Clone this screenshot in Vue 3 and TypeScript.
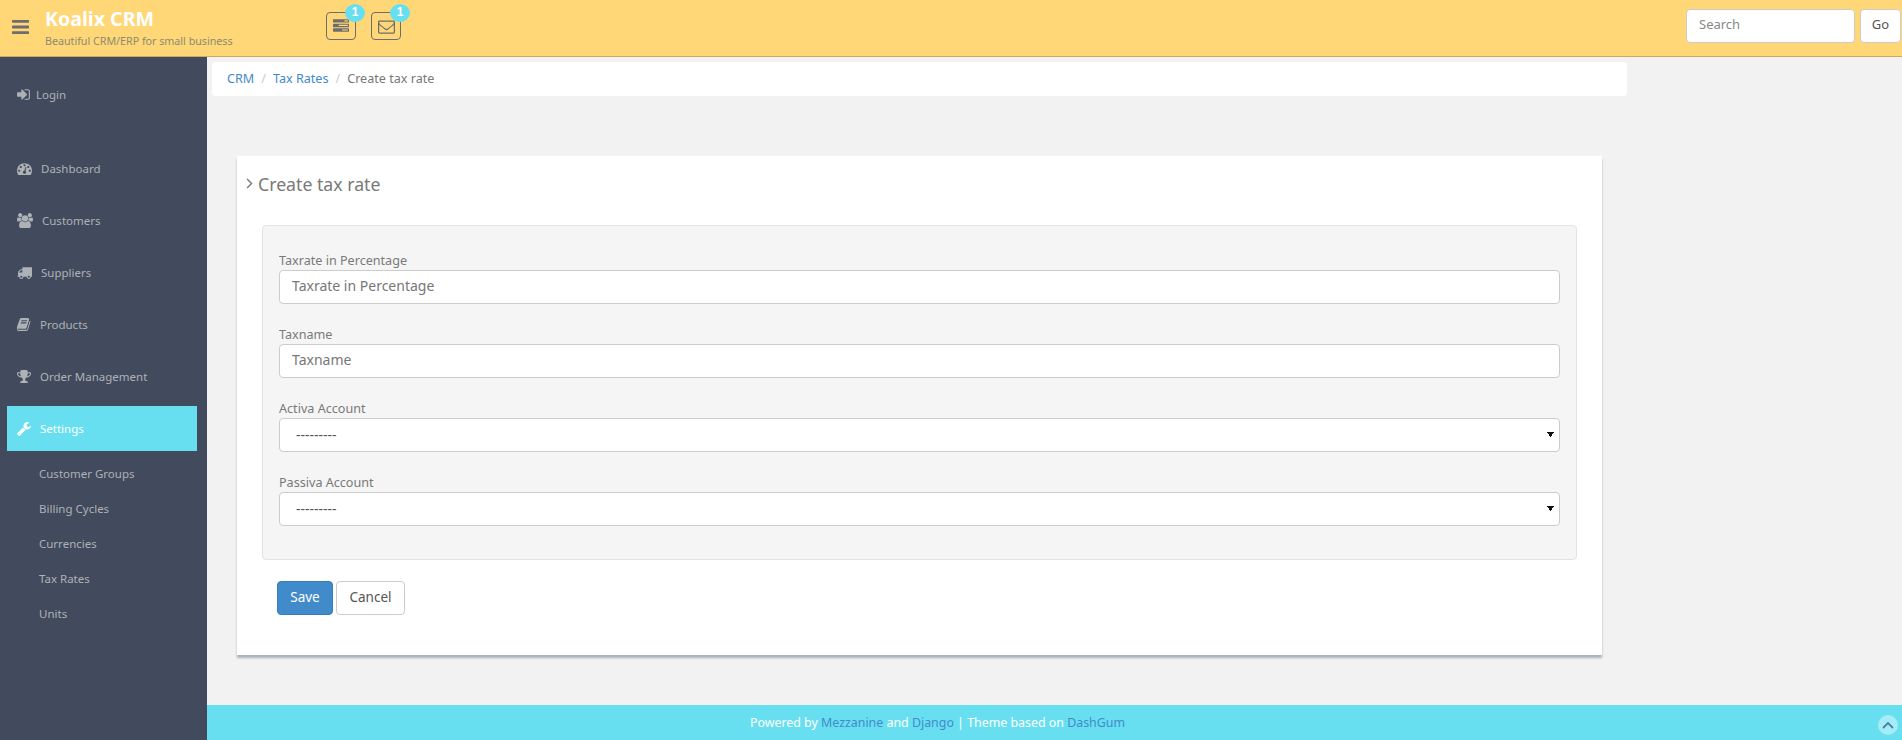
<script setup lang="ts">
interface NavItem {
  label: string;
  viewBox: string;
  width: number;
  d: string;
  active?: boolean;
}

const icons = {
  tasks: 'M1024 1408h640v-128h-640v128zm-384-512h1024v-128h-1024v128zm640-512h384v-128h-384v128zm512 832v256q0 26-19 45t-45 19h-1664q-26 0-45-19t-19-45v-256q0-26 19-45t45-19h1664q26 0 45 19t19 45zm0-512v256q0 26-19 45t-45 19h-1664q-26 0-45-19t-19-45v-256q0-26 19-45t45-19h1664q26 0 45 19t19 45zm0-512v256q0 26-19 45t-45 19h-1664q-26 0-45-19t-19-45v-256q0-26 19-45t45-19h1664q26 0 45 19t19 45z',
  envelope: 'M1664 1504v-768q-32 36-69 66-268 206-426 338-51 43-83 67t-86.500 48.500-102.500 24.500h-2q-48 0-102.500-24.500t-86.500-48.500-83-67q-158-132-426-338-37-30-69-66v768q0 13 9.500 22.500t22.500 9.500h1472q13 0 22.500-9.500t9.500-22.500zm0-1051v-24.500l-.5-13-3-12.500-5.500-9-9-7.500-14-2.500h-1472q-13 0-22.500 9.500t-9.500 22.500q0 168 147 284 193 152 401 317 6 5 35 29.500t46 37.500 44.500 31.500 50.500 27.500 43 9h2q20 0 43-9t50.500-27.500 44.500-31.500 46-37.500 35-29.500q208-165 401-317 54-43 100.500-115.500t46.500-131.500zm128-37v1088q0 66-47 113t-113 47h-1472q-66 0-113-47t-47-113v-1088q0-66 47-113t113-47h1472q66 0 113 47t47 113z',
  bars: 'M1664 1344v128q0 26-19 45t-45 19h-1408q-26 0-45-19t-19-45v-128q0-26 19-45t45-19h1408q26 0 45 19t19 45zm0-512v128q0 26-19 45t-45 19h-1408q-26 0-45-19t-19-45v-128q0-26 19-45t45-19h1408q26 0 45 19t19 45zm0-512v128q0 26-19 45t-45 19h-1408q-26 0-45-19t-19-45v-128q0-26 19-45t45-19h1408q26 0 45 19t19 45z',
  signIn: 'M1184 896q0 26-19 45l-544 544q-19 19-45 19t-45-19-19-45v-288h-448q-26 0-45-19t-19-45v-384q0-26 19-45t45-19h448v-288q0-26 19-45t45-19 45 19l544 544q19 19 19 45zm352-352v704q0 119-84.500 203.500t-203.500 84.500h-320q-13 0-22.500-9.500t-9.500-22.500q0-4-1-20t-.5-26.500 3-23.500 10-19.500 20.500-6.500h320q66 0 113-47t47-113v-704q0-66-47-113t-113-47h-312l-11.500-1-11.500-3-8-5.500-7-9-2-13.500q0-4-1-20t-.5-26.500 3-23.500 10-19.500 20.500-6.500h320q119 0 203.500 84.500t84.500 203.500z',
};

const navItems: NavItem[] = [
  {
    label: 'Dashboard',
    viewBox: '0 0 1792 1792',
    width: 15,
    d: 'M384 1152q0-53-37.500-90.500t-90.500-37.500-90.500 37.500-37.500 90.500 37.500 90.500 90.500 37.500 90.500-37.500 37.500-90.500zm192-448q0-53-37.500-90.500t-90.500-37.500-90.500 37.500-37.500 90.500 37.500 90.500 90.500 37.500 90.500-37.500 37.500-90.500zm428 481l101-382q6-26-7.500-48.500t-38.500-29.500-48 6.500-30 39.500l-101 382q-60 5-107 43.500t-63 98.500q-20 77 20 146t117 89 146-20 89-117q16-60-6-117t-72-91zm660-33q0-53-37.500-90.500t-90.500-37.500-90.500 37.500-37.500 90.500 37.500 90.500 90.500 37.500 90.500-37.500 37.500-90.500zm-640-640q0-53-37.500-90.500t-90.500-37.500-90.500 37.500-37.500 90.500 37.500 90.500 90.500 37.500 90.500-37.500 37.500-90.500zm448 192q0-53-37.500-90.500t-90.500-37.500-90.500 37.500-37.500 90.500 37.500 90.500 90.500 37.500 90.500-37.500 37.500-90.500zm320 448q0 261-141 483-19 29-54 29h-1402q-35 0-54-29-141-221-141-483 0-182 71-348t191-286 286-191 348-71 348 71 286 191 191 286 71 348z',
  },
  {
    label: 'Customers',
    viewBox: '0 0 1920 1792',
    width: 16,
    d: 'M593 896q-162 5-265 128h-134q-82 0-138-40.500t-56-118.500q0-353 124-353 6 0 43.500 21t97.500 42.500 119 21.500q67 0 133-23-5 37-5 66 0 139 81 256zm1071 637q0 120-73 189.500t-194 69.500h-874q-121 0-194-69.500t-73-189.500q0-53 3.500-103.500t14-109 26.500-108.500 43-97.500 62-81 85.500-53.500 111.500-20q10 0 43 21.500t73 48 107 48 135 21.500 135-21.500 107-48 73-48 43-21.500q61 0 111.500 20t85.500 53.500 62 81 43 97.500 26.500 108.500 14 109 3.500 103.500zm-1024-1277q0 106-75 181t-181 75-181-75-75-181 75-181 181-75 181 75 75 181zm704 384q0 159-112.500 271.500t-271.500 112.500-271.500-112.500-112.500-271.500 112.500-271.500 271.500-112.500 271.500 112.500 112.500 271.500zm576 225q0 78-56 118.500t-138 40.500h-134q-103-123-265-128 81-117 81-256 0-29-5-66 66 23 133 23 59 0 119-21.500t97.500-42.500 43.500-21q124 0 124 353zm-128-609q0 106-75 181t-181 75-181-75-75-181 75-181 181-75 181 75 75 181z',
  },
  {
    label: 'Suppliers',
    viewBox: '0 0 1792 1792',
    width: 15,
    d: 'M640 1408q0-52-38-90t-90-38-90 38-38 90 38 90 90 38 90-38 38-90zm-384-512h384v-256h-158q-13 0-22 9l-195 195q-9 9-9 22v30zm1280 512q0-52-38-90t-90-38-90 38-38 90 38 90 90 38 90-38 38-90zm256-1088v1024q0 15-4 26.500t-13.500 18.500-16.500 11.500-23.500 6-22.500 2-25.500 0-22.500-.5q0 106-75 181t-181 75-181-75-75-181h-384q0 106-75 181t-181 75-181-75-75-181h-64q-3 0-22.500.5t-25.500 0-22.500-2-23.500-6-16.500-11.500-13.500-18.500-4-26.500q0-26 19-45t45-19v-320q0-8-.5-35t0-38 2.500-34.500 6.500-37 14-30.500 22.500-30l198-198q19-19 50.500-32t58.500-13h160v-192q0-26 19-45t45-19h1024q26 0 45 19t19 45z',
  },
  {
    label: 'Products',
    viewBox: '64 0 1664 1792',
    width: 14,
    d: 'M1639 478q40 57 18 129l-275 906q-19 64-76.500 107.500t-122.500 43.500h-923q-77 0-148.500-53.500t-99.500-131.500q-24-67-2-127 0-4 3-27t4-37q1-8-3-21.500t-3-19.500q2-11 8-21t16.500-23.500 16.500-23.500q23-38 45-91.500t30-91.500q3-10 .5-30t-.5-28q3-11 17-28t17-23q21-36 42-92t25-90q1-9-2.500-32t.5-28q4-13 22-30.500t22-22.500q19-26 42.500-84.500t27.500-96.500q1-8-3-25.500t-2-26.500q2-8 9-18t18-23 17-21q8-12 16.500-30.500t15-35 16-36 19.500-32 26.500-23.500 36-11.500 47.500 5.500l-1 3q38-9 51-9h761q74 0 114 56t18 130l-274 906q-36 119-71.500 153.500t-128.500 34.500h-869q-27 0-38 15-11 16-1 43 24 70 144 70h923q29 0 56-15.500t35-41.500l300-987q7-22 5-57 38 15 59 43zm-1064 2q-4 13 2 22.500t20 9.500h608q13 0 25.500-9.500t16.500-22.500l21-64q4-13-2-22.500t-20-9.500h-608q-13 0-25.500 9.500t-16.500 22.500zm-83 256q-4 13 2 22.500t20 9.500h608q13 0 25.500-9.500t16.500-22.500l21-64q4-13-2-22.500t-20-9.500h-608q-13 0-25.500 9.500t-16.500 22.500z',
  },
  {
    label: 'Order Management',
    viewBox: '64 0 1664 1792',
    width: 14,
    d: 'M522 883q-74-162-74-371h-256v96q0 78 94.500 162t235.500 113zm1078-275v-96h-256q0 209-74 371 141-29 235.500-113t94.500-162zm128-128v128q0 71-41.500 143t-112 130-173 97.500-215.500 44.500q-42 54-95 95-38 34-52.500 72.500t-14.500 89.500q0 54 30.500 91t97.500 37q75 0 133.500 45.500t58.500 114.500v64q0 14-9 23t-23 9h-832q-14 0-23-9t-9-23v-64q0-69 58.500-114.500t133.500-45.500q67 0 97.500-37t30.500-91q0-51-14.500-89.500t-52.500-72.500q-53-41-95-95-113-5-215.500-44.500t-173-97.500-112-130-41.500-143v-128q0-40 28-68t68-28h288v-96q0-66 47-113t113-47h576q66 0 113 47t47 113v96h288q40 0 68 28t28 68z',
  },
  {
    label: 'Settings',
    viewBox: '64 0 1664 1792',
    width: 14,
    active: true,
    d: 'M448 1472q0-26-19-45t-45-19-45 19-19 45 19 45 45 19 45-19 19-45zm644-420l-682 682q-37 37-90 37-52 0-91-37l-106-108q-38-36-38-90 0-53 38-91l681-681q39 98 114.500 173.500t173.500 114.500zm634-435q0 39-23 106-47 134-164.500 217.500t-258.500 83.500q-185 0-316.500-131.500t-131.500-316.500 131.500-316.500 316.500-131.500q58 0 121.500 16.500t107.500 46.500q16 11 16 28t-16 28l-293 169v224l193 107q5-3 79-48.500t135.500-81 70.500-35.500q15 0 23.500 10t8.500 25z',
  },
];

const subItems = ['Customer Groups', 'Billing Cycles', 'Currencies', 'Tax Rates', 'Units'];

const textFields = ['Taxrate in Percentage', 'Taxname'];
const selectFields = ['Activa Account', 'Passiva Account'];
</script>

<template>
  <div class="page">
    <header class="topbar">
      <svg class="menu-toggle" viewBox="128 0 1536 1792" width="17" height="20" fill="currentColor">
        <path :d="icons.bars" />
      </svg>
      <div class="brand">
        <div class="brand-name">Koalix CRM</div>
        <div class="brand-tag">Beautiful CRM/ERP for small business</div>
      </div>
      <div class="notify">
        <a class="notify-btn">
          <svg viewBox="0 0 1792 1792" width="16" height="16" fill="currentColor"><path :d="icons.tasks" /></svg>
          <span class="badge">1</span>
        </a>
        <a class="notify-btn">
          <svg viewBox="0 0 1792 1792" width="17" height="17" fill="currentColor"><path :d="icons.envelope" /></svg>
          <span class="badge">1</span>
        </a>
      </div>
      <form class="search" @submit.prevent>
        <input class="search-input" type="text" placeholder="Search" />
        <button class="search-go" type="submit">Go</button>
      </form>
    </header>

    <div class="body-row">
      <aside class="sidebar">
        <a class="nav-link login">
          <svg viewBox="0 0 1536 1792" width="13" height="15" fill="currentColor"><path :d="icons.signIn" /></svg>
          <span>Login</span>
        </a>
        <ul class="nav">
          <li v-for="item in navItems" :key="item.label">
            <a class="nav-link" :class="{ active: item.active }">
              <svg :viewBox="item.viewBox" :width="item.width" height="15" fill="currentColor"><path :d="item.d" /></svg>
              <span>{{ item.label }}</span>
            </a>
          </li>
        </ul>
        <ul class="subnav">
          <li v-for="sub in subItems" :key="sub"><a>{{ sub }}</a></li>
        </ul>
      </aside>

      <main class="content">
        <div class="content-scroll">
          <ol class="breadcrumb">
            <li><a>CRM</a></li>
            <li><a>Tax Rates</a></li>
            <li class="current">Create tax rate</li>
          </ol>

          <section class="card">
            <h3 class="card-title">
              <svg viewBox="0 0 10 16" width="7" height="11" fill="none" stroke="currentColor" stroke-width="2"><path d="M1.500 1.500 8 8l-6.500 6.500" /></svg>
              Create tax rate
            </h3>
            <form @submit.prevent>
              <div class="well">
                <div v-for="field in textFields" :key="field" class="form-group">
                  <label>{{ field }}</label>
                  <input class="form-control" type="text" :placeholder="field" />
                </div>
                <div v-for="field in selectFields" :key="field" class="form-group">
                  <label>{{ field }}</label>
                  <select class="form-control form-select">
                    <option>---------</option>
                  </select>
                </div>
              </div>
              <div class="actions">
                <button class="btn btn-primary" type="submit">Save</button>
                <button class="btn btn-default" type="button">Cancel</button>
              </div>
            </form>
          </section>
        </div>

        <footer class="footer">
          <span>Powered by <a>Mezzanine</a> and <a>Django</a> | Theme based on <a>DashGum</a></span>
          <a class="go-top">
            <svg viewBox="0 0 12 8" width="12" height="8" fill="none" stroke="currentColor" stroke-width="1.800"><path d="M1 7l5-5 5 5" /></svg>
          </a>
        </footer>
      </main>
    </div>
  </div>
</template>

<style scoped>
.page {
  display: flex;
  flex-direction: column;
  height: 740px;
  overflow: hidden;
  background: #f2f2f2;
  color: #797979;
  font-family: "Noto Sans", "Liberation Sans", sans-serif;
  font-size: 12.6px;
}

.topbar {
  display: flex;
  align-items: center;
  flex: none;
  height: 56px;
  background: #ffd777;
  border-bottom: 1px solid #c9aa5f;
}

.menu-toggle {
  margin-left: 12px;
  margin-bottom: 2px;
  color: #6d6d6d;
}

.brand {
  width: 281px;
  margin-left: 16px;
}

.brand-name {
  margin-top: -3px;
  color: #fff;
  font-size: 19.600px;
  font-weight: 700;
  line-height: 28px;
}

.brand-tag {
  color: #8c8a72;
  font-size: 10.700px;
  line-height: 16px;
}

.notify {
  display: flex;
  gap: 15px;
  margin-bottom: 4px;
}

.notify-btn {
  position: relative;
  display: flex;
  align-items: center;
  justify-content: center;
  width: 30px;
  height: 28px;
  box-sizing: border-box;
  border: 1px solid #6d6d6d;
  border-radius: 4px;
  color: #6d6d6d;
}

.badge {
  position: absolute;
  top: -9px;
  right: -10px;
  width: 20px;
  height: 18px;
  border-radius: 50%;
  background: #68dff0;
  color: #fff;
  font-family: "Liberation Sans", sans-serif;
  font-size: 12px;
  font-weight: 700;
  line-height: 17px;
  text-align: center;
}

.search {
  display: flex;
  gap: 5px;
  margin-left: auto;
  margin-right: 1px;
  margin-bottom: 5px;
}

.search-input {
  box-sizing: border-box;
  width: 169px;
  height: 34px;
  padding: 4px 12px 8px;
  border: 1px solid #ccc;
  border-radius: 4px;
  background: #fff;
  font: inherit;
  font-size: 13px;
}

.search-input::placeholder {
  color: #888;
}

.search-go {
  width: 41px;
  height: 34px;
  padding: 0 0 3px;
  border: 1px solid #ccc;
  border-radius: 4px;
  background: #fff;
  color: #555;
  font: inherit;
  font-size: 13px;
}

.body-row {
  display: flex;
  flex: 1;
  min-height: 0;
}

.sidebar {
  flex: none;
  width: 207px;
  padding-top: 15px;
  box-sizing: border-box;
  background: #424a5d;
  color: #aeb2b7;
  font-size: 11.500px;
}

.nav,
.subnav {
  margin: 0;
  padding: 0;
  list-style: none;
}

.nav {
  margin-top: 29px;
}

.nav li + li {
  margin-top: 7px;
}

.nav-link {
  display: flex;
  align-items: center;
  gap: 9px;
  width: 190px;
  height: 45px;
  margin-left: 7px;
  padding-left: 10px;
  box-sizing: border-box;
}

.nav-link.login {
  gap: 6px;
}

.nav-link.active {
  background: #68dff0;
  color: #fff;
}

.subnav {
  margin-top: 5px;
}

.subnav li {
  height: 35px;
  padding-left: 39px;
  line-height: 35px;
}

.content {
  position: relative;
  display: flex;
  flex: 1;
  flex-direction: column;
  min-width: 0;
}

.content-scroll {
  flex: 1;
  padding: 5px 0 0 5px;
}

.breadcrumb {
  display: flex;
  align-items: center;
  width: 1415px;
  height: 34px;
  margin: 0;
  padding: 0 15px 1px;
  box-sizing: border-box;
  border-radius: 4px;
  background: #fff;
  list-style: none;
}

.breadcrumb li + li::before {
  content: "/";
  padding: 0 7px;
  color: #ccc;
}

.breadcrumb a {
  color: #428bca;
}

.card {
  width: 1365px;
  height: 499px;
  margin: 60px 0 0 25px;
  box-sizing: border-box;
  background: #fff;
  box-shadow: 0 3px 2px #aab2bd;
}

.card-title {
  display: flex;
  align-items: center;
  gap: 5px;
  height: 69px;
  margin: 0;
  padding: 0 0 14px 9px;
  box-sizing: border-box;
  color: #797979;
  font-size: 17.700px;
  font-weight: 400;
}

.well {
  width: 1315px;
  height: 335px;
  margin-left: 25px;
  padding: 25px 16px 0;
  box-sizing: border-box;
  border: 1px solid #e3e3e3;
  border-radius: 4px;
  background: #f5f5f5;
}

.form-group {
  margin-bottom: 21px;
}

.form-group label {
  display: block;
  height: 19px;
  line-height: 19px;
}

.form-control {
  display: block;
  width: 1281px;
  height: 34px;
  padding: 4px 12px 8px;
  box-sizing: border-box;
  border: 1px solid #ccc;
  border-radius: 4px;
  background: #fff;
  color: #555;
  font: inherit;
  font-size: 14px;
}

.form-control::placeholder {
  color: #777;
}

.form-select {
  appearance: none;
  padding: 4px 12px 6px 16px;
  background-image: linear-gradient(to top right, transparent 50%, #111 50%), linear-gradient(to top left, transparent 50%, #111 50%);
  background-repeat: no-repeat;
  background-size: 4px 6px;
  background-position: right 8px center, right 5px center;
}

.actions {
  display: flex;
  gap: 3px;
  margin: 21px 0 0 40px;
}

.btn {
  height: 34px;
  padding: 0 0 3px;
  border-radius: 4px;
  font: inherit;
  font-size: 13.500px;
}

.btn-primary {
  width: 56px;
  border: 1px solid #357ebd;
  background: #428bca;
  color: #fff;
}

.btn-default {
  width: 69px;
  border: 1px solid #ccc;
  background: #fff;
  color: #555;
}

.footer {
  position: relative;
  flex: none;
  height: 35px;
  padding-right: 234px;
  background: #68dff0;
  color: #fff;
  font-size: 12.400px;
  line-height: 35px;
  text-align: center;
}

.footer a {
  color: #428bca;
}

.footer .go-top {
  position: absolute;
  top: 10px;
  right: 4px;
  display: flex;
  align-items: center;
  justify-content: center;
  width: 20px;
  height: 20px;
  border-radius: 50%;
  background: rgba(255, 255, 255, 0.4);
  color: #4c7fa8;
}
</style>

<style>
html,
body {
  margin: 0;
  overflow: hidden;
}
</style>
